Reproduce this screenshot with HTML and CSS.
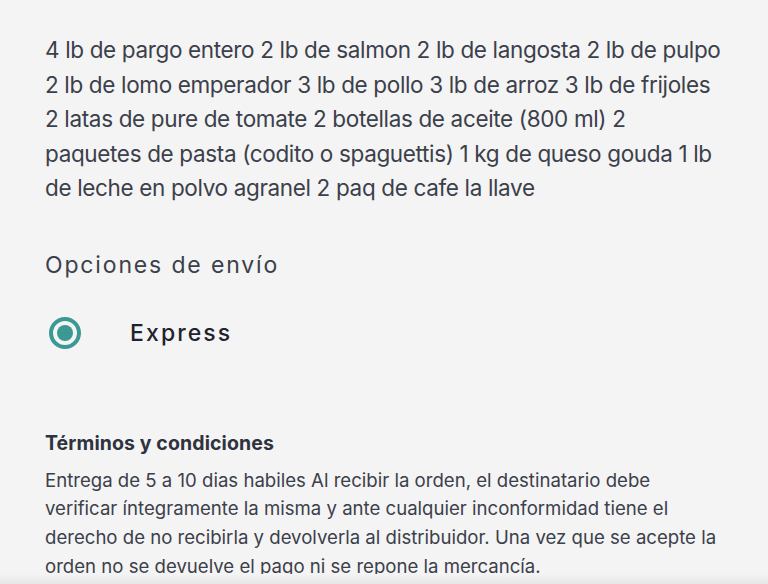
FILE: index.html
```html
<!DOCTYPE html>
<html lang="es">
<head>
<meta charset="utf-8">
<link rel="stylesheet" href="styles.css">
</head>
<body>
<main class="page">
  <p class="items">4 lb de pargo entero 2 lb de salmon 2 lb de langosta 2 lb de pulpo<br>2 lb de lomo emperador 3 lb de pollo 3 lb de arroz 3 lb de frijoles<br>2 latas de pure de tomate 2 botellas de aceite (800 ml) 2<br>paquetes de pasta (codito o spaguettis) 1 kg de queso gouda 1 lb<br>de leche en polvo agranel 2 paq de cafe la llave</p>
  <h2 class="section-title">Opciones de envío</h2>
  <label class="option">
    <span class="radio"><span class="radio-dot"></span></span>
    <span class="option-label">Express</span>
  </label>
  <section class="terms">
    <h3 class="terms-title">Términos y condiciones</h3>
    <p class="terms-text">Entrega de 5 a 10 dias habiles Al recibir la orden, el destinatario debe<br>verificar íntegramente la misma y ante cualquier inconformidad tiene el<br>derecho de no recibirla y devolverla al distribuidor. Una vez que se acepte la<br>orden no se devuelve el pago ni se repone la mercancía.</p>
  </section>
</main>
<div class="bottom-shade"></div>
</body>
</html>
```
FILE: styles.css
```css
html, body {
  margin: 0;
  padding: 0;
  background: #f4f4f4;
}
body {
  font-family: Inter, "Noto Sans", sans-serif;
  color: #3b404b;
  overflow: hidden;
  height: 584px;
}
.page {
  padding: 33px 20px 0 45px;
}
.items {
  margin: 0;
  font-size: 22.5px;
  line-height: 34.5px;
  letter-spacing: -0.35px;
  white-space: nowrap;
}
.section-title {
  margin: 44px 0 0;
  font-size: 23px;
  font-weight: 400;
  letter-spacing: 1.85px;
  line-height: 30px;
  color: #3b404b;
}
.option {
  display: flex;
  align-items: center;
  gap: 49px;
  margin-top: 37px;
  margin-left: 4px;
}
.radio {
  width: 32px;
  height: 32px;
  box-sizing: border-box;
  border: 4px solid #3a9993;
  border-radius: 50%;
  display: flex;
  align-items: center;
  justify-content: center;
}
.radio-dot {
  width: 16px;
  height: 16px;
  border-radius: 50%;
  background: #3a9993;
}
.option-label {
  font-size: 23px;
  letter-spacing: 2.1px;
  color: #1f232b;
  font-weight: 500;
}
.terms {
  margin-top: 80px;
}
.terms-title {
  margin: 0;
  font-size: 19.5px;
  font-weight: 700;
  line-height: 28px;
  color: #2e333d;
  letter-spacing: 0.1px;
}
.terms-text {
  margin: 9px 0 0;
  font-size: 18.6px;
  line-height: 28.8px;
  letter-spacing: 0;
  white-space: nowrap;
}
.bottom-shade {
  position: fixed;
  left: 0;
  right: 0;
  bottom: 0;
  height: 10px;
  background: linear-gradient(#f4f4f4, #e6e6e6);
}
```
